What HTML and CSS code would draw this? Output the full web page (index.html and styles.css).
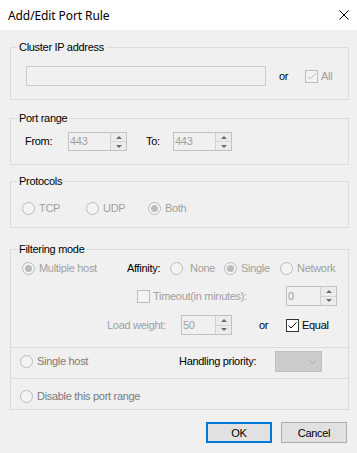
FILE: index.html
```html
<!DOCTYPE html>
<html lang="en">
<head>
    <meta charset="UTF-8">
    <meta name="viewport" content="width=device-width, initial-scale=1.0">
    <title>Add/Edit Port Rule</title>
    <link rel="stylesheet" href="styles.css">
</head>
<body>
    <div class="titlebar">
        <span class="title">Add/Edit Port Rule</span>
        <svg class="close" width="10" height="10" viewBox="0 0 10 10">
            <path d="M0.5 0.5L9.5 9.5M9.5 0.5L0.5 9.5" stroke="#000" stroke-width="1" fill="none"/>
        </svg>
    </div>

    <div class="client">
        <!-- Cluster IP -->
        <fieldset class="group g-cluster">
            <legend>Cluster IP address</legend>
            <div class="row ip-row">
                <div class="textbox ip-box"></div>
                <span class="lbl ip-or">or</span>
                <span class="check dis on">
                    <svg width="11" height="11" viewBox="0 0 11 11"><path d="M1.5 5.5L4 8L9.5 2.5" stroke="#bcbcbc" fill="none"/></svg>
                </span>
                <span class="lbl dim ip-all">All</span>
            </div>
        </fieldset>

        <!-- Port range -->
        <fieldset class="group g-port">
            <legend>Port range</legend>
            <div class="row port-row">
                <span class="lbl from-lbl">From:</span>
                <div class="spin port-spin">
                    <span class="spin-val">443</span>
                    <span class="spin-btns"><span class="up"></span><span class="down"></span></span>
                </div>
                <span class="lbl to-lbl">To:</span>
                <div class="spin port-spin">
                    <span class="spin-val">443</span>
                    <span class="spin-btns"><span class="up"></span><span class="down"></span></span>
                </div>
            </div>
        </fieldset>

        <!-- Protocols -->
        <fieldset class="group g-proto">
            <legend>Protocols</legend>
            <div class="row proto-row">
                <label class="opt opt-tcp"><span class="radio"></span><span class="dim">TCP</span></label>
                <label class="opt opt-udp"><span class="radio"></span><span class="dim">UDP</span></label>
                <label class="opt"><span class="radio on"></span><span class="dim">Both</span></label>
            </div>
        </fieldset>

        <!-- Filtering mode -->
        <fieldset class="group g-filter">
            <legend>Filtering mode</legend>
            <div class="row f-row1">
                <label class="opt opt-multi"><span class="radio on"></span><span class="dim">Multiple host</span></label>
                <span class="lbl aff-lbl">Affinity:</span>
                <label class="opt opt-none"><span class="radio"></span><span class="dim gap-wide">None</span></label>
                <label class="opt opt-single"><span class="radio on"></span><span class="dim">Single</span></label>
                <label class="opt"><span class="radio"></span><span class="dim">Network</span></label>
            </div>
            <div class="row f-row2">
                <span class="check dis timeout-check"></span>
                <span class="lbl dim timeout-lbl">Timeout(in minutes):</span>
                <div class="spin small-spin">
                    <span class="spin-val">0</span>
                    <span class="spin-btns"><span class="up"></span><span class="down"></span></span>
                </div>
            </div>
            <div class="row f-row3">
                <span class="lbl dim load-lbl">Load weight:</span>
                <div class="spin small-spin">
                    <span class="spin-val">50</span>
                    <span class="spin-btns"><span class="up"></span><span class="down"></span></span>
                </div>
                <span class="lbl load-or">or</span>
                <span class="check on">
                    <svg width="11" height="11" viewBox="0 0 11 11"><path d="M1.5 5.5L4 8L9.5 2.5" stroke="#000" fill="none"/></svg>
                </span>
                <span class="lbl equal-lbl">Equal</span>
            </div>

            <div class="sep sep1"></div>
            <div class="row f-row4">
                <label class="opt opt-host"><span class="radio"></span><span class="grey">Single host</span></label>
                <span class="lbl prio-lbl">Handling priority:</span>
                <div class="combo">
                    <svg width="7" height="4" viewBox="0 0 7 4"><path d="M0.5 0.5L3.5 3.5L6.5 0.5" stroke="#a6a6a6" fill="none"/></svg>
                </div>
            </div>

            <div class="sep sep2"></div>
            <div class="row f-row5">
                <label class="opt opt-host"><span class="radio"></span><span class="grey">Disable this port range</span></label>
            </div>
        </fieldset>

        <div class="buttons">
            <button class="btn btn-default">OK</button>
            <button class="btn">Cancel</button>
        </div>
    </div>
</body>
</html>
```

FILE: styles.css
```css
* {
    box-sizing: border-box;
}

body {
    margin: 0;
    width: 357px;
    height: 453px;
    overflow: hidden;
    background-color: #f0f0f0;
    font-family: "Liberation Sans", Arial, sans-serif;
    font-size: 11px;
    letter-spacing: -0.3px;
    line-height: 13px;
    color: #000;
}

.titlebar {
    height: 30px;
    background-color: #fff;
    display: flex;
    align-items: center;
    justify-content: space-between;
    padding: 0 8px;
}

.title {
    font-family: "Noto Sans", sans-serif;
    font-size: 12px;
    letter-spacing: -0.1px;
}

.client {
    padding: 11px 0 0 10px;
}

/* Group boxes */
.group {
    width: 339px;
    margin: 0;
    padding: 0;
    min-width: 0;
    border: 1px solid #dcdcdc;
}

.group legend {
    margin-left: 6px;
    padding: 0 2px;
    line-height: 13px;
}

.g-port {
    margin-top: 12px;
    padding-bottom: 13px;
}

.g-cluster {
    padding-bottom: 13px;
}

.g-proto {
    margin-top: 10px;
    padding-bottom: 9px;
}

.g-filter {
    margin-top: 15px;
    padding-bottom: 3px;
}

.row {
    display: flex;
    align-items: center;
    height: 20px;
    white-space: nowrap;
}

.lbl {
    flex: none;
}

.dim {
    color: #a0a0a0;
}

.grey {
    color: #7a7a7a;
}

/* Cluster IP row */
.ip-row {
    margin-top: 12px;
}

.textbox {
    border: 1px solid #cccccc;
    background-color: #f0f0f0;
    height: 20px;
}

.ip-box {
    margin-left: 15px;
    width: 240px;
}

.ip-or {
    margin-left: 13px;
    width: 26px;
}

.ip-all {
    margin-left: 3px;
}

/* Port range row */
.port-row {
    margin-top: 7px;
    height: 19px;
}

.from-lbl {
    margin-left: 14px;
    width: 43px;
}

.to-lbl {
    margin-left: 19px;
    width: 27px;
}

/* Spin boxes */
.spin {
    display: flex;
    height: 100%;
    border: 1px solid #c2c2c2;
    background-color: #f0f0f0;
    flex: none;
}

.port-spin {
    width: 59px;
}

.small-spin {
    width: 51px;
}

.spin-val {
    flex: 1;
    padding-left: 1px;
    color: #a0a0a0;
    display: flex;
    align-items: center;
}

.spin-btns {
    width: 16px;
    display: flex;
    flex-direction: column;
    border-left: 1px solid #d0d0d0;
    background-color: #ececec;
}

.spin-btns span {
    flex: 1;
    display: flex;
    align-items: center;
    justify-content: center;
}

.spin-btns .up {
    border-bottom: 1px solid #d6d6d6;
}

.spin-btns .up::after {
    content: "";
    border-left: 3px solid transparent;
    border-right: 3px solid transparent;
    border-bottom: 3px solid #6a6a6a;
}

.spin-btns .down::after {
    content: "";
    border-left: 3px solid transparent;
    border-right: 3px solid transparent;
    border-top: 3px solid #6a6a6a;
}

/* Radio buttons and checkboxes */
.opt {
    display: flex;
    align-items: center;
    flex: none;
}

.radio {
    width: 13px;
    height: 13px;
    border: 1px solid #bcbcbc;
    border-radius: 50%;
    background-color: #f4f4f4;
    display: flex;
    align-items: center;
    justify-content: center;
    margin-right: 4px;
    flex: none;
}

.radio.on::after {
    content: "";
    width: 7px;
    height: 7px;
    border-radius: 50%;
    background-color: #bcbcbc;
}

.check {
    width: 13px;
    height: 13px;
    border: 1px solid #333;
    background-color: #fff;
    flex: none;
    display: flex;
}

.check.dis {
    border-color: #bcbcbc;
    background-color: #f4f4f4;
}

.proto-row {
    margin-top: 10px;
}

.opt-tcp {
    margin-left: 11px;
    width: 64px;
}

.opt-udp {
    width: 62px;
}

/* Filtering mode rows */
.f-row1 {
    margin-top: 2px;
}

.opt-multi {
    margin-left: 11px;
    width: 105px;
}

.aff-lbl {
    width: 43px;
}

.opt-none {
    width: 54px;
}

.gap-wide {
    margin-left: 3px;
}

.opt-single {
    width: 56px;
}

.f-row2 {
    margin-top: 8px;
}

.timeout-check {
    margin-left: 126px;
}

.timeout-lbl {
    margin-left: 3px;
    width: 133px;
}

.f-row3 {
    margin-top: 9px;
}

.load-lbl {
    margin-left: 96px;
    width: 74px;
}

.load-or {
    margin-left: 27px;
    width: 27px;
}

.equal-lbl {
    margin-left: 3px;
}

.sep {
    height: 1px;
    background-color: #dcdcdc;
}

.sep1 {
    margin-top: 12px;
}

.f-row4 {
    margin-top: 3px;
    height: 21px;
}

.opt-host {
    margin-left: 9px;
}

.f-row4 .opt-host {
    width: 159px;
}

.prio-lbl {
    width: 96px;
}

.combo {
    width: 47px;
    height: 21px;
    background-color: #cccccc;
    border: 1px solid #bfbfbf;
    display: flex;
    align-items: center;
    justify-content: flex-end;
    padding-right: 5px;
}

.sep2 {
    margin-top: 6px;
}

.f-row5 {
    margin-top: 7px;
}

/* Dialog buttons */
.buttons {
    width: 337px;
    margin-top: 12px;
    display: flex;
    justify-content: flex-end;
    gap: 9px;
}

.btn {
    width: 66px;
    height: 21px;
    padding: 0;
    background-color: #e1e1e1;
    border: 1px solid #adadad;
    font-family: inherit;
    font-size: 11px;
    letter-spacing: -0.3px;
    color: #000;
}

.btn-default {
    border: 2px solid #0078d7;
}
```
